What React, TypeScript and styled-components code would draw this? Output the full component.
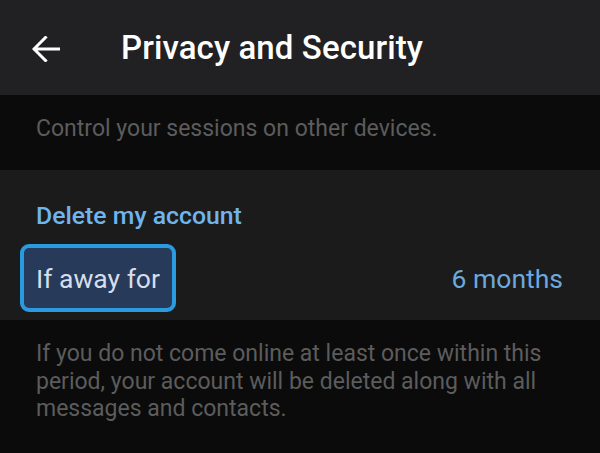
import styled, { createGlobalStyle } from "styled-components";

const GlobalStyle = createGlobalStyle`
  html, body {
    margin: 0;
    padding: 0;
    background: #0b0b0b;
  }
  body {
    font-family: Roboto, "Noto Sans", "Liberation Sans", sans-serif;
    -webkit-font-smoothing: antialiased;
  }
`;

const Screen = styled.div`
  width: 600px;
  height: 453px;
  overflow: hidden;
  display: flex;
  flex-direction: column;
  background: #0b0b0b;
`;

const Header = styled.header`
  height: 95px;
  flex-shrink: 0;
  display: flex;
  align-items: center;
  padding-left: 32px;
  background: #212123;
  box-sizing: border-box;
`;

const BackButton = styled.button`
  display: flex;
  align-items: center;
  justify-content: center;
  padding: 0;
  margin: 0;
  border: 0;
  background: transparent;
  width: 28px;
  height: 28px;
  margin-top: 2px;
`;

const Title = styled.h1`
  margin: 0 0 0 61px;
  font-size: 33px;
  font-weight: 500;
  color: #ffffff;
  letter-spacing: 0.1px;
`;

const Hint = styled.p`
  margin: 0;
  padding: 0 36px;
  font-size: 23px;
  line-height: 27.5px;
  color: #5c5c5c;
`;

const InfoBlock = styled.div`
  height: 75px;
  flex-shrink: 0;
  box-sizing: border-box;
  padding-top: 20px;
`;

const Section = styled.section`
  height: 150px;
  flex-shrink: 0;
  box-sizing: border-box;
  background: #1b1b1b;
  padding-top: 31px;
  display: flex;
  flex-direction: column;
`;

const SectionTitle = styled.h2`
  margin: 0;
  padding: 0 36px;
  font-size: 24.8px;
  line-height: 30px;
  font-weight: 500;
  color: #70b4ee;
`;

const Row = styled.div`
  display: flex;
  align-items: center;
  justify-content: space-between;
  padding: 0 37px 0 20px;
  margin-top: 13px;
`;

const FocusLabel = styled.div`
  box-sizing: border-box;
  height: 68px;
  display: flex;
  align-items: center;
  padding: 1px 12px 0;
  border: 4px solid #2a9be0;
  border-radius: 9px;
  background: #283a5a;
  font-size: 26.5px;
  color: #d6deeb;
`;

const Value = styled.span`
  font-size: 26.5px;
  color: #6ba9de;
  padding-top: 1px;
`;

const Footer = styled.div`
  flex: 1;
  padding-top: 20px;
`;

const ArrowLeft = () => (
  <svg width="28" height="26" viewBox="0 0 28 26" fill="none">
    <path
      d="M27 13H2.5M13.5 1.5L2 13l11.5 11.5"
      stroke="#ffffff"
      strokeWidth="3"
      strokeLinecap="square"
    />
  </svg>
);

export default function App() {
  return (
    <>
      <GlobalStyle />
      <Screen>
        <Header>
          <BackButton aria-label="Back">
            <ArrowLeft />
          </BackButton>
          <Title>Privacy and Security</Title>
        </Header>
        <InfoBlock>
          <Hint>Control your sessions on other devices.</Hint>
        </InfoBlock>
        <Section>
          <SectionTitle>Delete my account</SectionTitle>
          <Row>
            <FocusLabel>If away for</FocusLabel>
            <Value>6 months</Value>
          </Row>
        </Section>
        <Footer>
          <Hint>
            If you do not come online at least once within this period, your
            account will be deleted along with all messages and contacts.
          </Hint>
        </Footer>
      </Screen>
    </>
  );
}
